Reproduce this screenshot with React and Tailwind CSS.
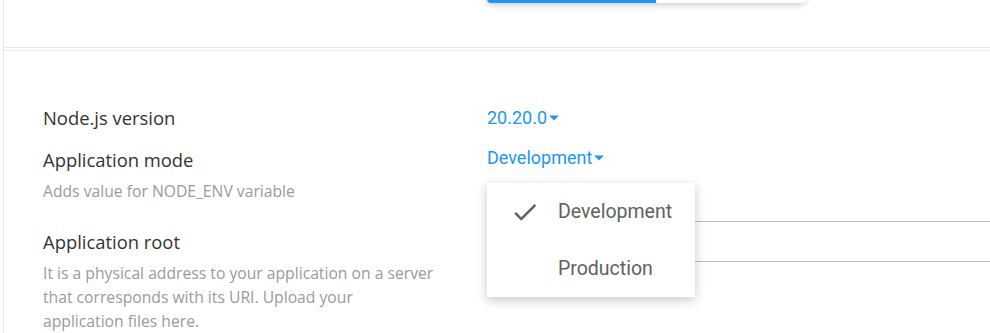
import React from 'react';

const Caret = () => (
  <svg className="ml-[2px] w-[10px] h-[6px]" viewBox="0 0 10 5" fill="currentColor">
    <path d="M0 0h10L5 5z" />
  </svg>
);

const MODES = ['Development', 'Production'];

export default function App() {
  const mode = 'Development';

  return (
    <div className="relative h-[333px] overflow-hidden bg-white" style={{ fontFamily: '"Open Sans", sans-serif' }}>
      <div className="ml-[3px] h-full border-l border-[#e6e6e6]">
        {/* Top card with clipped toggle */}
        <div className="flex items-start h-[48px] border-b border-[#e8e8e8]">
          <div className="ml-[483px] -mt-[33px] flex w-[318px] h-[36px] rounded-[4px] shadow-[0_2px_6px_rgba(0,0,0,0.2)] overflow-hidden">
            <div className="w-[169px] bg-[#2196f3]" />
            <div className="flex-1 bg-white" />
          </div>
        </div>

        {/* Settings card */}
        <div className="mt-[2px] border-t border-[#e8e8e8] pl-[39px] pt-[55px]">
          <div className="grid grid-cols-[444px_1fr]">
            {/* Node.js version */}
            <div className="text-[18.4px] leading-[24px] text-[#333]">Node.js version</div>
            <div className="flex items-center text-[18px] leading-[24px] text-[#2196f3]" style={{ fontFamily: 'Roboto, sans-serif' }}>
              20.20.0<Caret />
            </div>

            {/* Application mode */}
            <div className="mt-[18px]">
              <div className="text-[18.4px] leading-[24px] text-[#333]">Application mode</div>
              <div className="mt-[7px] text-[15.7px] leading-[24px] text-[#9a9a9a]">Adds value for NODE_ENV variable</div>
            </div>
            <div className="mt-[16px] flex items-start text-[18px] leading-[24px] text-[#2196f3]" style={{ fontFamily: 'Roboto, sans-serif' }}>
              <span className="flex items-center">{mode}<Caret /></span>
            </div>

            {/* Application root */}
            <div className="mt-[27px] pr-[20px]">
              <div className="text-[18.4px] leading-[24px] text-[#333]">Application root</div>
              <div className="mt-[7px] text-[15.7px] leading-[24px] text-[#9a9a9a]">
                It is a physical address to your application on a server<br />
                that corresponds with its URI. Upload your<br />
                application files here.
              </div>
            </div>
            <div>
              <div className="h-[19px] border-b border-[#bdbdbd]" />
              <div className="h-[40px] border-b border-[#bdbdbd]" />
            </div>
          </div>
        </div>
      </div>

      {/* Mode dropdown menu */}
      <div className="absolute left-[487px] top-[183px] w-[208px] bg-white shadow-[0_3px_10px_rgba(0,0,0,0.22)]" style={{ fontFamily: 'Roboto, sans-serif' }}>
        {MODES.map((m) => (
          <div key={m} className="flex items-center h-[57px] text-[19.5px] text-[#616161]">
            <div className="w-[71px] flex justify-center pl-[4px]">
              {m === mode && (
                <svg className="w-[30px] h-[30px]" viewBox="0 0 24 24" fill="#616161">
                  <path d="M9 16.17L4.83 12l-1.42 1.41L9 19 21 7l-1.41-1.41z" />
                </svg>
              )}
            </div>
            <span>{m}</span>
          </div>
        ))}
      </div>
    </div>
  );
}
